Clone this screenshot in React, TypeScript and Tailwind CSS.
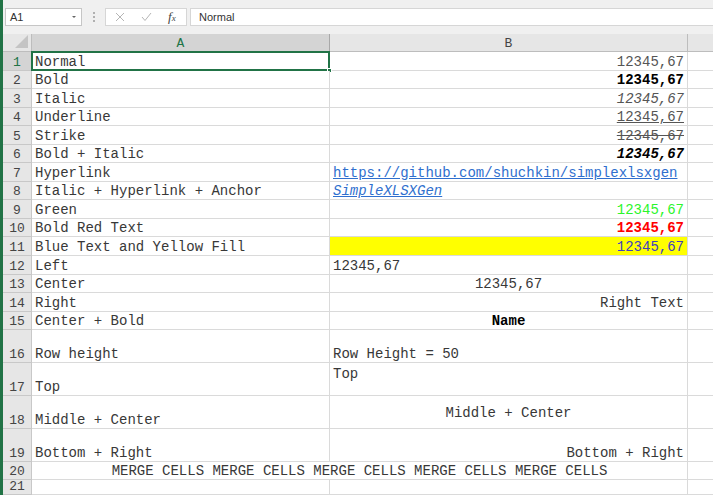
import type { ReactNode } from "react";

type RowDef = {
  n: number;
  h: string;
  a?: ReactNode;
  b?: ReactNode;
  bCls?: string;
  bBg?: string;
  merged?: ReactNode;
};

const mono = "font-['Liberation_Mono',monospace]";

const rows: RowDef[] = [
  { n: 1, h: "h-[18.55px]", a: "Normal", b: <span className="text-[#555]">12345,67</span>, bCls: "justify-end" },
  { n: 2, h: "h-[18.55px]", a: "Bold", b: <span className="font-bold text-black">12345,67</span>, bCls: "justify-end" },
  { n: 3, h: "h-[18.55px]", a: "Italic", b: <span className="italic text-[#555]">12345,67</span>, bCls: "justify-end" },
  { n: 4, h: "h-[18.55px]", a: "Underline", b: <span className="underline text-[#555]">12345,67</span>, bCls: "justify-end" },
  { n: 5, h: "h-[18.55px]", a: "Strike", b: <span className="line-through text-[#555]">12345,67</span>, bCls: "justify-end" },
  { n: 6, h: "h-[18.55px]", a: "Bold + Italic", b: <span className="font-bold italic text-black">12345,67</span>, bCls: "justify-end" },
  {
    n: 7,
    h: "h-[18.55px]",
    a: "Hyperlink",
    b: <span className="underline text-[#2f6fce]">https://github.com/shuchkin/simplexlsxgen</span>,
  },
  {
    n: 8,
    h: "h-[18.55px]",
    a: "Italic + Hyperlink + Anchor",
    b: <span className="italic underline text-[#2f6fce]">SimpleXLSXGen</span>,
  },
  { n: 9, h: "h-[18.55px]", a: "Green", b: <span className="text-[#2bf52b]">12345,67</span>, bCls: "justify-end" },
  { n: 10, h: "h-[18.55px]", a: "Bold Red Text", b: <span className="font-bold text-[#ff0000]">12345,67</span>, bCls: "justify-end" },
  {
    n: 11,
    h: "h-[18.55px]",
    a: "Blue Text and Yellow Fill",
    b: <span className="text-[#4040c0]">12345,67</span>,
    bCls: "justify-end",
    bBg: "bg-[#ffff00]",
  },
  { n: 12, h: "h-[18.55px]", a: "Left", b: "12345,67" },
  { n: 13, h: "h-[18.55px]", a: "Center", b: "12345,67", bCls: "justify-center" },
  { n: 14, h: "h-[18.55px]", a: "Right", b: "Right Text", bCls: "justify-end" },
  { n: 15, h: "h-[18.55px]", a: "Center + Bold", b: <span className="font-bold text-black">Name</span>, bCls: "justify-center" },
  { n: 16, h: "h-[33px]", a: "Row height", b: "Row Height = 50" },
  { n: 17, h: "h-[33px]", a: "Top", b: "Top", bCls: "!items-start pt-[4px]" },
  { n: 18, h: "h-[33px]", a: "Middle + Center", b: "Middle + Center", bCls: "!items-center justify-center pt-[3px]" },
  { n: 19, h: "h-[33px]", a: "Bottom + Right", b: "Bottom + Right", bCls: "justify-end" },
  {
    n: 20,
    h: "h-[18px]",
    merged: "MERGE CELLS MERGE CELLS MERGE CELLS MERGE CELLS MERGE CELLS",
  },
  { n: 21, h: "h-[15px]" },
];

function SheetRow({ row }: { row: RowDef }) {
  const active = row.n === 1;
  return (
    <div className={`flex ${row.h} shrink-0`}>
      <div
        className={`w-[29px] shrink-0 flex items-end justify-center border-r border-b border-[#c8c8c8] text-[13px] leading-[14px] ${
          active ? "bg-[#d4d4d4] text-[#217346]" : "bg-[#e6e6e6] text-[#444]"
        }`}
      >
        {row.n}
      </div>
      {row.merged ? (
        <div className="w-[656px] shrink-0 flex items-end justify-center border-r border-b border-[#dadada] bg-white">
          {row.merged}
        </div>
      ) : (
        <>
          <div className="relative w-[298px] shrink-0 flex items-end px-[3px] border-r border-b border-[#dadada] bg-white">
            <span className="whitespace-nowrap">{row.a}</span>
            {active && (
              <div className="absolute -left-px -top-px -right-px -bottom-px border-2 border-[#217346]">
                <div className="absolute -right-[4px] -bottom-[4px] w-[5px] h-[5px] bg-[#217346] border border-white" />
              </div>
            )}
          </div>
          <div
            className={`w-[358px] shrink-0 flex items-end px-[3px] border-r border-b border-[#dadada] ${row.bBg ?? "bg-white"} ${row.bCls ?? ""}`}
          >
            <span className="whitespace-nowrap">{row.b}</span>
          </div>
        </>
      )}
      <div className="flex-1 border-b border-[#dadada] bg-white" />
    </div>
  );
}

export default function App() {
  return (
    <div className={`w-[713px] h-[495px] overflow-hidden flex bg-[#f0f0f0] ${mono} text-[14px] leading-[15px] text-[#383838]`}>
      <div className="w-[3px] shrink-0 bg-[#217346]" />
      <div className="flex-1 flex flex-col min-w-0">
        {/* formula bar */}
        <div className="h-[34px] shrink-0 flex items-start pt-[8px] pl-[2px] font-['Segoe_UI','Liberation_Sans',sans-serif] text-[11px] leading-[14px] text-[#333]">
          <div className="w-[77px] h-[18px] bg-white border border-[#c6c6c6] flex items-center justify-between px-[4px]">
            <span>A1</span>
            <svg width="6" height="4" viewBox="0 0 6 4">
              <path d="M1 1 L3 3 L5 1 Z" fill="#666" />
            </svg>
          </div>
          <div className="w-[23px] h-[18px] flex flex-col items-center justify-center gap-[2px]">
            <div className="w-[2px] h-[2px] bg-[#b0b0b0]" />
            <div className="w-[2px] h-[2px] bg-[#b0b0b0]" />
            <div className="w-[2px] h-[2px] bg-[#b0b0b0]" />
          </div>
          <div className="w-[82px] h-[18px] bg-white border border-[#d6d6d6] flex items-center">
            <svg className="ml-[9px]" width="10" height="10" viewBox="0 0 10 10">
              <path d="M1 1 L9 9 M9 1 L1 9" stroke="#b5b5b5" strokeWidth="1" />
            </svg>
            <svg className="ml-[16px]" width="11" height="10" viewBox="0 0 11 10">
              <path d="M1 5 L4 8.5 L10 1" stroke="#b5b5b5" strokeWidth="1" fill="none" />
            </svg>
            <span className="ml-[16px] italic font-['Liberation_Serif',serif] text-[13px] text-[#444]">
              f<span className="text-[9px]">x</span>
            </span>
          </div>
          <div className="ml-[3px] flex-1 h-[18px] bg-white border border-[#d6d6d6] border-r-0 flex items-center pl-[8px]">
            Normal
          </div>
        </div>

        {/* column headers */}
        <div className="h-[18px] shrink-0 flex text-[13px] leading-[15px] text-[#444]">
          <div className="relative w-[29px] shrink-0 bg-[#e6e6e6] border-r border-b border-[#bdbdbd] overflow-hidden">
            <div className="absolute right-[3px] bottom-[3px] w-0 h-0 border-l-[13px] border-l-transparent border-b-[13px] border-b-[#c4c4c4]" />
          </div>
          <div className="w-[298px] shrink-0 flex items-end justify-center bg-[#d4d4d4] text-[#217346] border-r border-b border-[#a8a8a8]">
            A
          </div>
          <div className="w-[358px] shrink-0 flex items-end justify-center bg-[#e6e6e6] border-r border-b border-[#bdbdbd]">
            B
          </div>
          <div className="flex-1 bg-[#e6e6e6] border-b border-[#bdbdbd]" />
        </div>

        {rows.map((r) => (
          <SheetRow key={r.n} row={r} />
        ))}
      </div>
    </div>
  );
}
